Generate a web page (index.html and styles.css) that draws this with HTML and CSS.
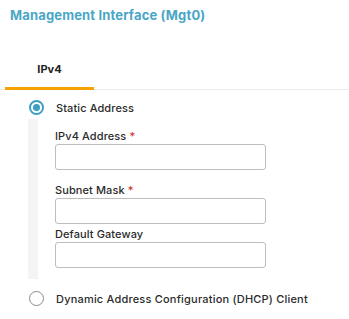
FILE: index.html
```html
<!DOCTYPE html>
<html lang="en">
<head>
  <meta charset="UTF-8" />
  <meta name="viewport" content="width=device-width, initial-scale=1" />
  <title>Management Interface</title>
  <link rel="stylesheet" href="styles.css">
</head>
<body>
  <h1 class="title">Management Interface (Mgt0)</h1>

  <div class="tabs">
    <div class="tab active">IPv4</div>
  </div>

  <div class="options">
    <label class="option">
      <span class="radio checked"></span>
      <span>Static Address</span>
    </label>

    <div class="static-fields">
      <div class="rail"></div>
      <div class="fields">
        <div class="field required">
          <label for="ipv4">IPv4 Address <span class="req">*</span></label>
          <input type="text" id="ipv4" />
        </div>
        <div class="field required">
          <label for="mask">Subnet Mask <span class="req">*</span></label>
          <input type="text" id="mask" />
        </div>
        <div class="field">
          <label for="gateway">Default Gateway</label>
          <input type="text" id="gateway" />
        </div>
      </div>
    </div>

    <label class="option dhcp">
      <span class="radio"></span>
      <span>Dynamic Address Configuration (DHCP) Client</span>
    </label>
  </div>
</body>
</html>
```

FILE: styles.css
```css
body {
  font-family: Inter, 'Open Sans', sans-serif;
  color: #333;
  background: white;
  margin: 0;
  padding: 0;
}
.title {
  margin: 0;
  padding: 7px 10px 0;
  font-size: 13px;
  line-height: 16px;
  font-weight: 700;
  letter-spacing: 0.15px;
  color: #4aa6c6;
}
.tabs {
  border-bottom: 1px solid #ebebeb;
  display: flex;
}
.tab {
  margin-left: 5px;
  width: 89px;
  text-align: center;
  font-size: 11px;
  line-height: 14px;
  font-weight: 700;
  color: #222;
  padding: 39px 0 11px;
  margin-bottom: -1px;
}
.tab.active {
  border-bottom: 3px solid #f5a300;
}
.option {
  display: flex;
  align-items: center;
  height: 15px;
  margin-top: 10px;
  padding-left: 29px;
  font-size: 11px;
  font-weight: 500;
  letter-spacing: 0.1px;
  color: #2b2b2b;
}
.option.dhcp {
  margin-top: 12px;
  letter-spacing: 0.2px;
}
.radio {
  width: 15px;
  height: 15px;
  box-sizing: border-box;
  border: 1.5px solid #8a8a8a;
  border-radius: 50%;
  margin-right: 12px;
  display: flex;
  align-items: center;
  justify-content: center;
}
.radio.checked {
  border: 2px solid #3a9fc2;
}
.radio.checked::after {
  content: "";
  width: 7px;
  height: 7px;
  border-radius: 50%;
  background: #3a9fc2;
}
.static-fields {
  display: flex;
  margin-top: 4px;
}
.rail {
  margin-left: 28px;
  width: 10px;
  background: #f4f4f4;
}
.fields {
  margin-left: 17px;
  padding: 9px 0 9px;
}
.field label {
  display: block;
  font-size: 11px;
  line-height: 16px;
  font-weight: 500;
  letter-spacing: 0.1px;
  color: #2b2b2b;
}
.req {
  color: #d0312d;
}
.field input {
  display: block;
  width: 211px;
  height: 26px;
  box-sizing: border-box;
  border: 1px solid #bdbdbd;
  border-radius: 3px;
  margin: 0 0 2px;
}
.field.required input {
  margin-bottom: 12px;
}
.field.required + .field.required input {
  margin-bottom: 2px;
}
```
